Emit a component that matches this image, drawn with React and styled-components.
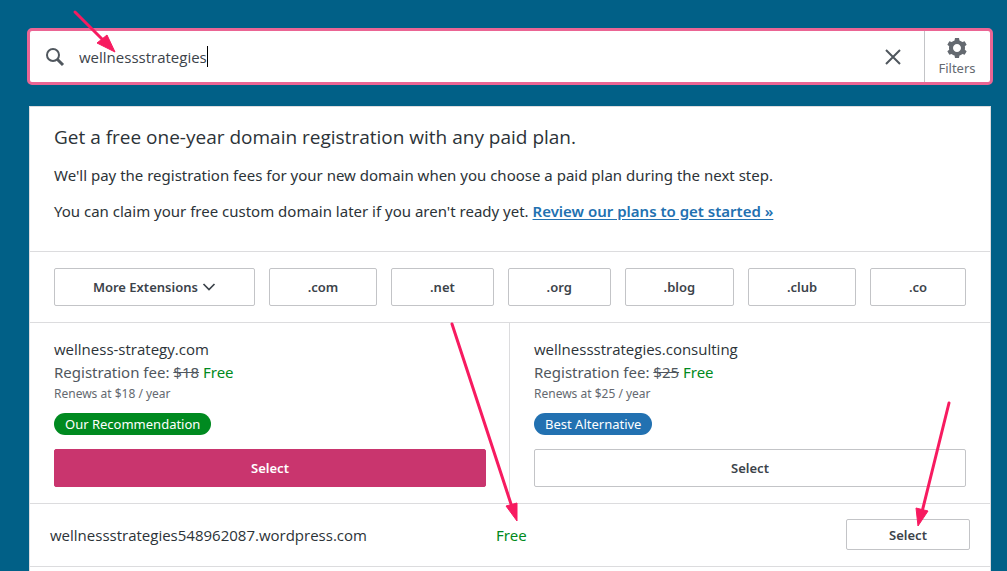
import React, { useState } from "react";
import styled, { createGlobalStyle, css } from "styled-components";

const color = {
  page: "#016087",
  text: "#2c3338",
  control: "#3c434a",
  muted: "#50575e",
  subtle: "#646970",
  line: "#dcdcde",
  border: "#c3c4c7",
  focus: "#eb6594",
  primary: "#c9356e",
  green: "#008a20",
  blue: "#2271b1",
  arrow: "#f71b60",
};

const displayFont = `"Open Sans", "Noto Sans", sans-serif`;

const GlobalStyle = createGlobalStyle`
  *, *::before, *::after { box-sizing: border-box; }
  body { margin: 0; background: ${color.page}; }
  body, button, input { font-family: "Noto Sans", "Open Sans", sans-serif; }
  h2, p { margin: 0; padding: 0; font-weight: 400; }
`;

const Page = styled.div`
  position: relative;
  display: flex;
  flex-direction: column;
  gap: 21px;
  min-height: 100vh;
  padding: 28px 14px 0 27px;
  color: ${color.text};
  font-size: 15px;
  line-height: 24px;
`;

const SearchBar = styled.form`
  display: flex;
  height: 57px;
  border: 3px solid ${color.focus};
  border-radius: 5px;
  background: #fff;
`;

const SearchField = styled.label`
  display: flex;
  flex: 1;
  align-items: center;
  padding-left: 13px;
  color: ${color.muted};
`;

const SearchInput = styled.input`
  field-sizing: content;
  margin-left: 12px;
  padding: 0;
  border: 0;
  outline: 0;
  background: transparent;
  color: ${color.control};
  caret-color: transparent;
  font-family: ${displayFont};
  font-size: 15px;
  line-height: 24px;
`;

const Caret = styled.span`
  width: 1px;
  height: 21px;
  background: #000;
`;

const ClearButton = styled.button`
  display: flex;
  align-items: center;
  justify-content: center;
  width: 62px;
  padding: 0;
  border: 0;
  background: none;
  color: ${color.muted};
`;

const FilterButton = styled.button`
  display: flex;
  flex-direction: column;
  align-items: center;
  width: 66px;
  padding: 5px 1px 0 0;
  border: 0;
  border-left: 1px solid ${color.border};
  background: none;
  color: ${color.subtle};
  font-size: 13px;
  line-height: 16px;
`;

const Card = styled.main`
  flex: 1;
  margin: 0 2px;
  border: 1px solid ${color.line};
  border-bottom: 0;
  background: #fff;
`;

const Intro = styled.section`
  display: grid;
  gap: 12px;
  padding: 18px 24px 28px;
  border-bottom: 1px solid ${color.line};
`;

const Title = styled.h2`
  padding-bottom: 2px;
  font-family: ${displayFont};
  font-size: 19px;
  line-height: 24px;
`;

const PlansLink = styled.a`
  color: ${color.blue};
  font-weight: 600;
  text-underline-offset: 2px;
`;

const Extensions = styled.div`
  display: flex;
  gap: 14px;
  padding: 16px 24px;
  border-bottom: 1px solid ${color.line};
`;

const Button = styled.button`
  display: flex;
  align-items: center;
  justify-content: center;
  gap: 4px;
  height: 38px;
  padding: 0 14px;
  border: 1px solid ${(p) => (p.$primary ? color.primary : color.border)};
  border-radius: 2px;
  background: ${(p) => (p.$primary ? color.primary : "#fff")};
  color: ${(p) => (p.$primary ? "#fff" : color.control)};
  font-size: 13px;
  font-weight: 600;
  line-height: 20px;
  ${(p) => p.$grow && css`flex: 1 1 auto;`}
  ${(p) => p.$block && css`width: 100%;`}
  ${(p) => p.$compact && css`width: 124px; height: 31px;`}
`;

const Featured = styled.section`
  display: grid;
  grid-template-columns: 1fr 1fr;
  border-bottom: 1px solid ${color.line};
`;

const Suggestion = styled.article`
  display: flex;
  flex-direction: column;
  align-items: flex-start;
  padding: 14px 24px 16px;

  & + & { box-shadow: -1px 0 ${color.line}; }
`;

const Domain = styled.h2`
  font-family: ${displayFont};
  font-size: 15px;
  line-height: 24px;
`;

const Fee = styled.p`
  color: ${color.muted};
  line-height: 22px;
`;

const Free = styled.span`
  color: ${color.green};
`;

const Renewal = styled.p`
  color: ${color.subtle};
  font-size: 12px;
  line-height: 22px;
`;

const Badge = styled.span`
  margin: 8px 0 14px;
  padding: 0 11px;
  border-radius: 11px;
  background: ${(p) => p.$tone};
  color: #fff;
  font-size: 13px;
  line-height: 22px;
`;

const ResultRow = styled.section`
  display: grid;
  grid-template-columns: 446px 1fr auto;
  align-items: center;
  padding: 15px 20px 16px;
  border-bottom: 1px solid ${color.line};
`;

const Annotations = styled.svg`
  position: absolute;
  top: 0;
  left: 0;
  width: 100%;
  height: 100%;
  pointer-events: none;
`;

const extensions = [".com", ".net", ".org", ".blog", ".club", ".co"];

const suggestions = [
  { domain: "wellness-strategy.com", price: "$18", badge: "Our Recommendation", tone: color.green, primary: true },
  { domain: "wellnessstrategies.consulting", price: "$25", badge: "Best Alternative", tone: color.blue, primary: false },
];

const arrows = [
  { shaft: "M75 12L103 40", head: "115,52 97,43 107,35" },
  { shaft: "M452 324L512 507", head: "517,521 506,506 517,503" },
  { shaft: "M949 403L922 512", head: "918,526 916,508 928,511" },
];

const SearchIcon = () => (
  <svg width="24" height="24" fill="none" stroke="currentColor" aria-hidden="true">
    <circle cx="10" cy="10" r="6" strokeWidth="2" />
    <path d="M14.5 14.5L20 20" strokeWidth="3" />
  </svg>
);

const CloseIcon = () => (
  <svg width="24" height="24" fill="none" stroke="currentColor" strokeWidth="2" aria-hidden="true">
    <path d="M5 5L19 19M19 5L5 19" />
  </svg>
);

const CogIcon = () => (
  <svg width="24" height="24" viewBox="0 0 24 24" fill="currentColor" aria-hidden="true">
    <path d="M20 12c0-.568-.06-1.122-.174-1.656l1.834-1.612-2-3.464-2.322.786c-.819-.736-1.787-1.308-2.859-1.657L14 2h-4l-.479 2.396c-1.072.349-2.04.921-2.859 1.657L4.34 5.268l-2 3.464 1.834 1.612C4.06 10.878 4 11.432 4 12s.06 1.122.174 1.656L2.34 15.268l2 3.464 2.322-.786c.819.736 1.787 1.308 2.859 1.657L10 22h4l.479-2.396c1.072-.349 2.039-.921 2.859-1.657l2.322.786 2-3.464-1.834-1.613C19.94 13.122 20 12.568 20 12zm-8 4c-2.209 0-4-1.791-4-4s1.791-4 4-4 4 1.791 4 4-1.791 4-4 4z" />
  </svg>
);

const ChevronIcon = () => (
  <svg width="14" height="10" fill="none" stroke="currentColor" strokeWidth="1.7" aria-hidden="true">
    <path d="M1.5 2L7 7.5L12.5 2" />
  </svg>
);

export default function App() {
  const [query, setQuery] = useState("wellnessstrategies");

  return (
    <>
      <GlobalStyle />
      <Page>
        <SearchBar role="search" onSubmit={(e) => e.preventDefault()}>
          <SearchField>
            <SearchIcon />
            <SearchInput aria-label="Search domains" value={query} onChange={(e) => setQuery(e.target.value)} />
            <Caret />
          </SearchField>
          <ClearButton type="button" aria-label="Clear search" onClick={() => setQuery("")}>
            <CloseIcon />
          </ClearButton>
          <FilterButton type="button">
            <CogIcon />
            Filters
          </FilterButton>
        </SearchBar>

        <Card>
          <Intro>
            <Title>Get a free one-year domain registration with any paid plan.</Title>
            <p>We'll pay the registration fees for your new domain when you choose a paid plan during the next step.</p>
            <p>
              You can claim your free custom domain later if you aren't ready yet.{" "}
              <PlansLink href="#plans">Review our plans to get started »</PlansLink>
            </p>
          </Intro>

          <Extensions>
            <Button type="button" $grow>
              More Extensions <ChevronIcon />
            </Button>
            {extensions.map((name) => (
              <Button type="button" $grow key={name}>{name}</Button>
            ))}
          </Extensions>

          <Featured>
            {suggestions.map((s) => (
              <Suggestion key={s.domain}>
                <Domain>{s.domain}</Domain>
                <Fee>
                  Registration fee: <s>{s.price}</s> <Free>Free</Free>
                </Fee>
                <Renewal>Renews at {s.price} / year</Renewal>
                <Badge $tone={s.tone}>{s.badge}</Badge>
                <Button type="button" $block $primary={s.primary}>Select</Button>
              </Suggestion>
            ))}
          </Featured>

          <ResultRow>
            <Domain>wellnessstrategies548962087.wordpress.com</Domain>
            <Free>Free</Free>
            <Button type="button" $compact>Select</Button>
          </ResultRow>
        </Card>

        <Annotations aria-hidden="true">
          {arrows.map((a) => (
            <g key={a.shaft} stroke={color.arrow} fill={color.arrow}>
              <path d={a.shaft} strokeWidth="3" strokeLinecap="round" />
              <polygon points={a.head} strokeWidth="1" />
            </g>
          ))}
        </Annotations>
      </Page>
    </>
  );
}
